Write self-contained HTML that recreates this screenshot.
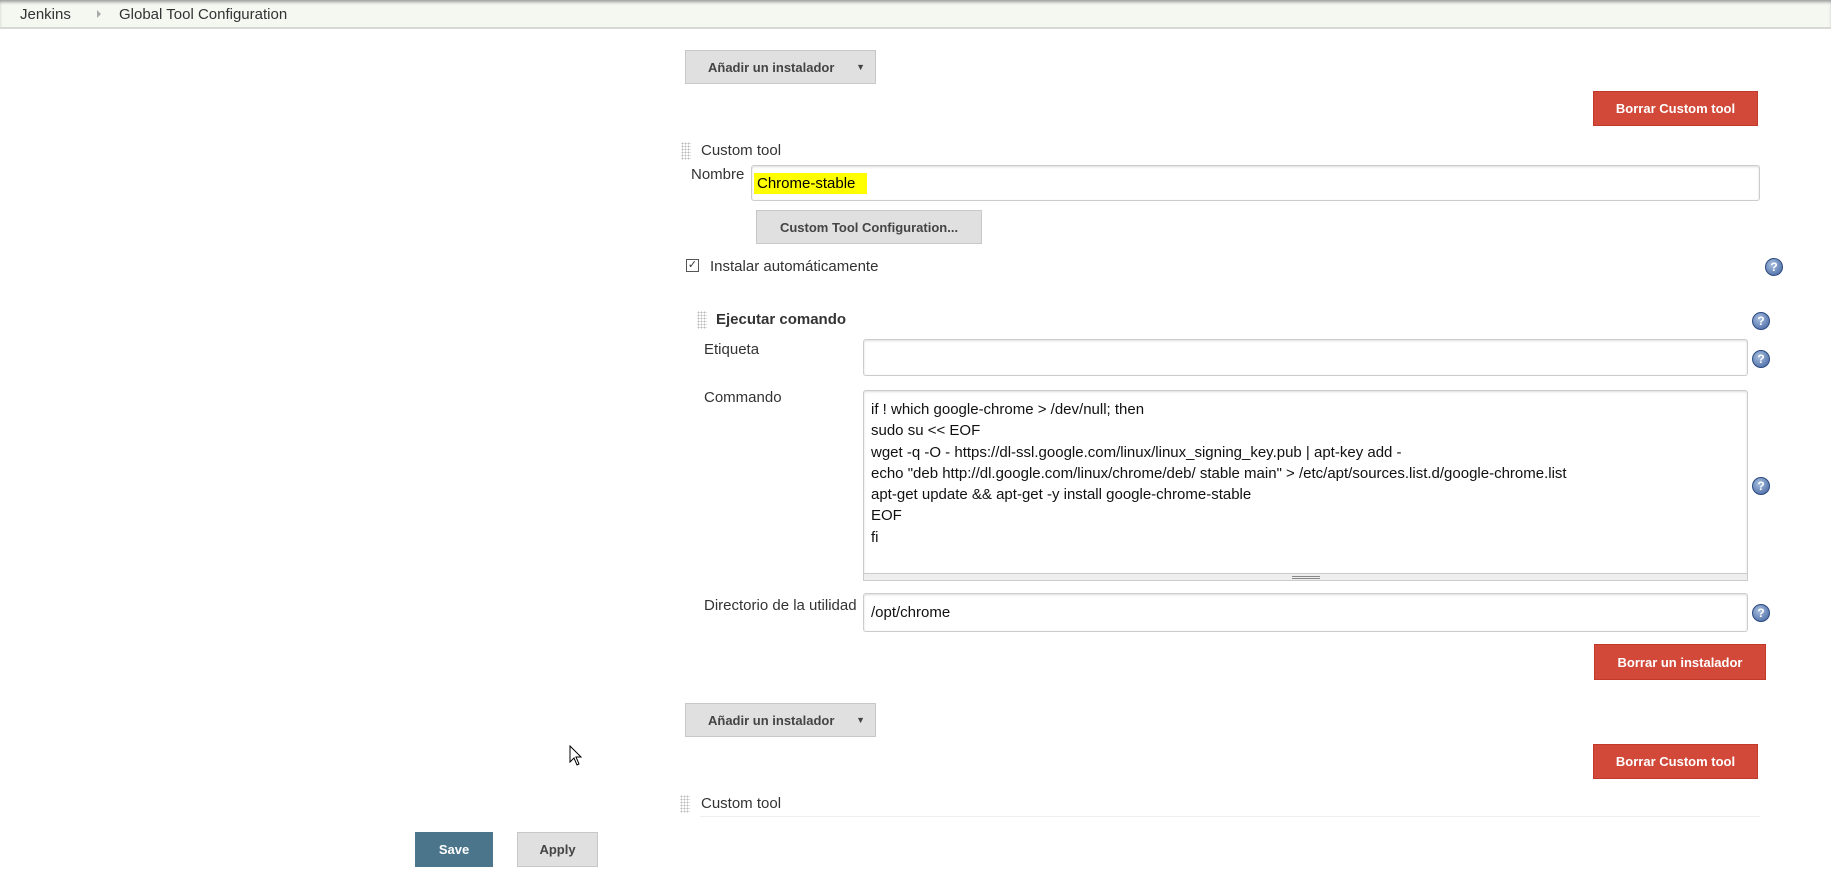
<!DOCTYPE html>
<html><head><meta charset="utf-8"><style>
*{box-sizing:border-box;margin:0;padding:0}
body{width:1831px;height:882px;background:#fff;font-family:"Liberation Sans",sans-serif;color:#333;position:relative;overflow:hidden;font-size:15px}
.a{position:absolute}
.hdr{left:0;top:0;width:1831px;height:29px;background:#f5f7f1;border-bottom:2px solid #d8d8d4;box-shadow:inset 0 3px 3px -1px #999}
.btn{position:absolute;border:1px solid #c8c8c8;background:#e0e0e0;font-weight:bold;font-size:13px;color:#444;display:flex;align-items:center;justify-content:center}
.red{background:#d24939;border:1px solid #c0392b;color:#fff}
.inp{position:absolute;border:1px solid #ccc;border-radius:3px;background:#fff;box-shadow:inset 0 1px 2px #ddd}
.help{position:absolute;width:18px;height:18px;border-radius:50%;background:radial-gradient(circle at 40% 35%,#a8c0e0,#3d5e9c);border:1px solid #2c4a80;color:#fff;font-size:12px;font-weight:bold;text-align:center;line-height:16px}
.grip{position:absolute;width:10px;height:18px;background-image:radial-gradient(#bbb 0.8px,transparent 0.9px);background-size:3px 3px}
.lbl{position:absolute;font-size:15px;color:#333}
</style></head><body>
<div class="a hdr"></div>
<div class="lbl" style="left:20px;top:6px">Jenkins</div>
<div class="a" style="left:97px;top:10px;width:0;height:0;border-left:4px solid #aaa;border-top:4px solid transparent;border-bottom:4px solid transparent"></div>
<div class="lbl" style="left:119px;top:6px">Global Tool Configuration</div>

<div class="btn" style="left:685px;top:50px;width:191px;height:34px;justify-content:flex-start;padding-left:22px">Añadir un instalador<span style="position:absolute;right:10px;font-size:9px">▼</span></div>
<div class="btn red" style="left:1593px;top:91px;width:165px;height:35px">Borrar Custom tool</div>

<div class="grip" style="left:681px;top:142px"></div>
<div class="lbl" style="left:701px;top:142px">Custom tool</div>
<div class="lbl" style="left:691px;top:166px">Nombre</div>
<div class="inp" style="left:751px;top:165px;width:1009px;height:36px"></div>
<div class="a" style="left:754px;top:173px;width:113px;height:21px;background:#ff0;font-size:15px;padding:2px 0 0 3px;color:#000">Chrome-stable</div>
<div class="btn" style="left:756px;top:210px;width:226px;height:34px">Custom Tool Configuration...</div>

<div class="a" style="left:686px;top:259px;width:13px;height:13px;border:1px solid #555;font-size:11px;line-height:11px;text-align:center">✓</div>
<div class="lbl" style="left:710px;top:258px">Instalar automáticamente</div>
<div class="help" style="left:1765px;top:258px">?</div>

<div class="grip" style="left:697px;top:311px"></div>
<div class="lbl" style="left:716px;top:311px;font-weight:bold">Ejecutar comando</div>
<div class="help" style="left:1752px;top:312px">?</div>

<div class="lbl" style="left:704px;top:341px">Etiqueta</div>
<div class="inp" style="left:863px;top:339px;width:885px;height:37px"></div>
<div class="help" style="left:1752px;top:350px">?</div>

<div class="lbl" style="left:704px;top:389px">Commando</div>
<div class="inp" style="left:863px;top:390px;width:885px;height:184px;border-radius:3px 3px 0 0"></div>
<div class="a" style="left:871px;top:399px;font-size:15px;line-height:21.3px;color:#111;white-space:pre">if ! which google-chrome &gt; /dev/null; then
sudo su &lt;&lt; EOF
wget -q -O - https://dl-ssl.google.com/linux/linux_signing_key.pub | apt-key add -
echo "deb http://dl.google.com/linux/chrome/deb/ stable main" &gt; /etc/apt/sources.list.d/google-chrome.list
apt-get update &amp;&amp; apt-get -y install google-chrome-stable
EOF
fi</div>
<div class="a" style="left:863px;top:573px;width:885px;height:8px;background:#eee;border:1px solid #ccc"><div style="margin:2px auto 0;width:28px;border-top:1px solid #888;border-bottom:1px solid #888;height:3px"></div></div>
<div class="help" style="left:1752px;top:477px">?</div>

<div class="lbl" style="left:704px;top:597px">Directorio de la utilidad</div>
<div class="inp" style="left:863px;top:593px;width:885px;height:39px"></div>
<div class="lbl" style="left:871px;top:604px;color:#111">/opt/chrome</div>
<div class="help" style="left:1752px;top:604px">?</div>

<div class="btn red" style="left:1594px;top:644px;width:172px;height:36px">Borrar un instalador</div>

<div class="btn" style="left:685px;top:703px;width:191px;height:34px;justify-content:flex-start;padding-left:22px">Añadir un instalador<span style="position:absolute;right:10px;font-size:9px">▼</span></div>
<div class="btn red" style="left:1593px;top:744px;width:165px;height:35px">Borrar Custom tool</div>

<div class="grip" style="left:680px;top:795px"></div>
<div class="lbl" style="left:701px;top:795px">Custom tool</div>
<div class="a" style="left:700px;top:816px;width:1060px;height:1px;background:#eee"></div>

<svg class="a" style="left:569px;top:745px" width="14" height="22" viewBox="0 0 14 22"><path d="M1 1 L1 17 L5 13 L8 20 L10 19 L7 12 L12 12 Z" fill="#fff" stroke="#000" stroke-width="1"/></svg>

<div class="btn" style="left:415px;top:832px;width:78px;height:35px;background:#4b758b;border-color:#4b758b;color:#fff">Save</div>
<div class="btn" style="left:517px;top:832px;width:81px;height:35px">Apply</div>
</body></html>
